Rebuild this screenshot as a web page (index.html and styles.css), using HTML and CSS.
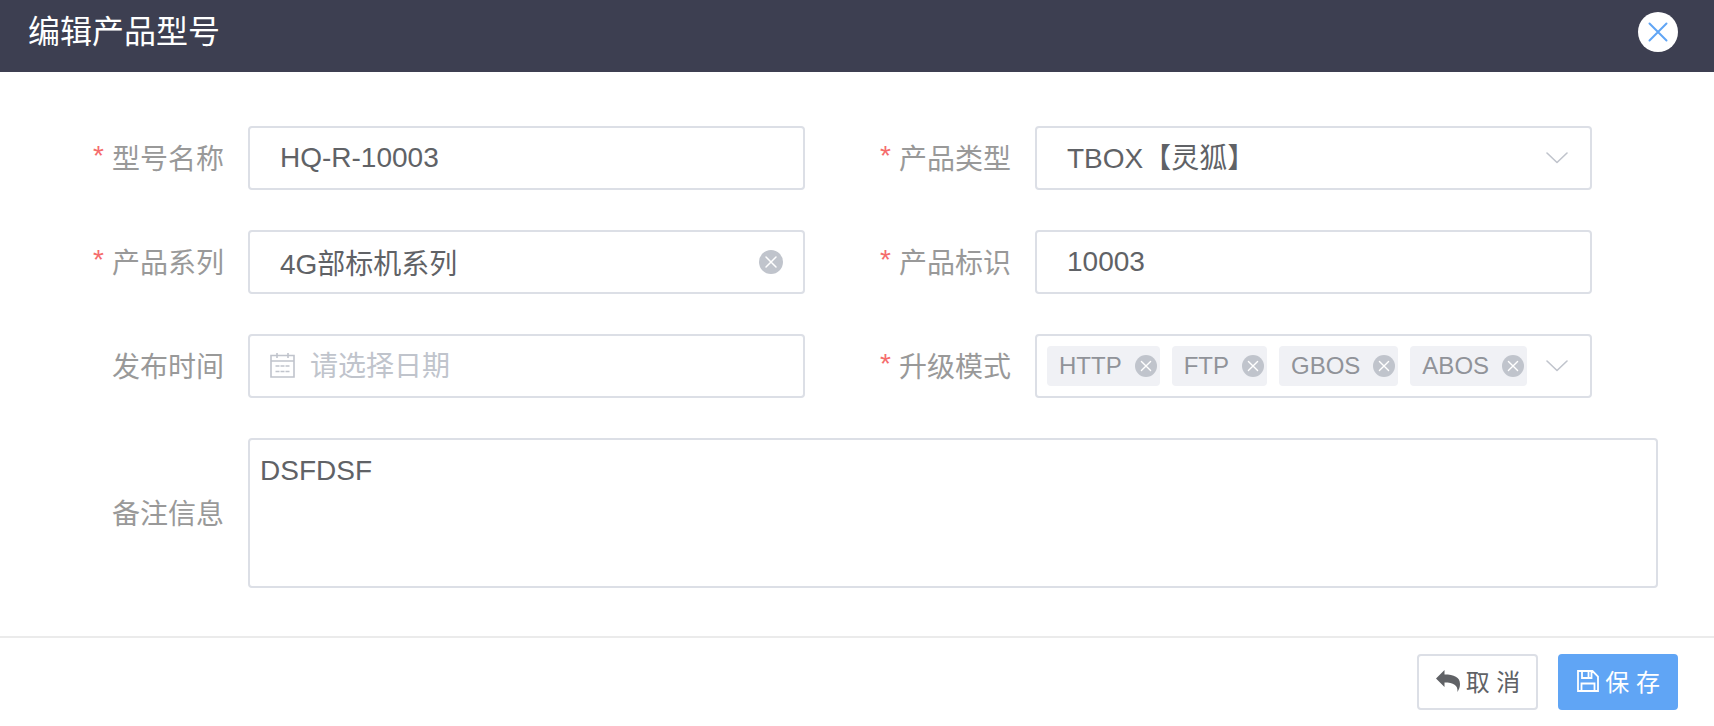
FILE: index.html
```html
<!DOCTYPE html>
<html lang="zh-CN">
<head>
    <meta charset="UTF-8">
    <meta name="viewport" content="width=device-width, initial-scale=1.0">
    <title>编辑产品型号</title>
    <link rel="stylesheet" href="styles.css">
</head>
<body>
    <!-- Shared icons -->
    <svg class="icon-defs" aria-hidden="true">
        <symbol id="icon-clear" viewBox="0 0 24 24">
            <circle cx="12" cy="12" r="12" fill="#c0c4cc"/>
            <path d="M7 7l10 10M17 7L7 17" fill="none" stroke="#fff" stroke-width="1.5" stroke-linecap="round"/>
        </symbol>
        <symbol id="icon-arrow" viewBox="0 0 22 12">
            <path d="M1 1l10 9.500L21 1" fill="none" stroke="#c0c4cc" stroke-width="1.600" stroke-linecap="round" stroke-linejoin="round"/>
        </symbol>
    </svg>

    <header class="dialog-header">
        <h1>编辑产品型号</h1>
        <button type="button" class="close-button" aria-label="关闭">
            <svg width="20" height="20" viewBox="0 0 20 20"><path d="M1.500 1.500l17 17M18.500 1.500l-17 17" fill="none" stroke="#60a5f5" stroke-width="2" stroke-linecap="round"/></svg>
        </button>
    </header>

    <form class="dialog-form" id="model-form">
        <div class="form-grid">
            <div class="form-item required">
                <label for="model-name">型号名称</label>
                <div class="control">
                    <input type="text" id="model-name" value="HQ-R-10003">
                </div>
            </div>
            <div class="form-item required">
                <label for="product-type">产品类型</label>
                <div class="control">
                    <select id="product-type">
                        <option>TBOX【灵狐】</option>
                    </select>
                    <svg class="select-arrow"><use href="#icon-arrow"/></svg>
                </div>
            </div>
            <div class="form-item required">
                <label for="product-series">产品系列</label>
                <div class="control">
                    <input type="text" id="product-series" value="4G部标机系列">
                    <button type="button" class="clear-button" aria-label="清空"><svg><use href="#icon-clear"/></svg></button>
                </div>
            </div>
            <div class="form-item required">
                <label for="product-code">产品标识</label>
                <div class="control">
                    <input type="text" id="product-code" value="10003">
                </div>
            </div>
            <div class="form-item">
                <label for="publish-date">发布时间</label>
                <div class="control">
                    <svg class="date-icon" viewBox="0 0 25 25" fill="none" stroke="#c0c4cc" stroke-width="1.600">
                        <path d="M1 2.500h23v21.500H1zM1 8h23M7 0v5M18 0v5"/>
                        <path d="M5.500 13h4M10.500 13h4M15.500 13h4M5.500 18.500h4M10.500 18.500h4M15.500 18.500h4"/>
                    </svg>
                    <input type="text" id="publish-date" class="date-input" placeholder="请选择日期">
                </div>
            </div>
            <div class="form-item required">
                <label for="upgrade-mode">升级模式</label>
                <div class="control tag-select">
                    <span class="tag">HTTP<button type="button" aria-label="移除 HTTP"><svg><use href="#icon-clear"/></svg></button></span>
                    <span class="tag">FTP<button type="button" aria-label="移除 FTP"><svg><use href="#icon-clear"/></svg></button></span>
                    <span class="tag">GBOS<button type="button" aria-label="移除 GBOS"><svg><use href="#icon-clear"/></svg></button></span>
                    <span class="tag">ABOS<button type="button" aria-label="移除 ABOS"><svg><use href="#icon-clear"/></svg></button></span>
                    <button type="button" id="upgrade-mode" class="tag-toggle" aria-haspopup="listbox"><svg class="select-arrow"><use href="#icon-arrow"/></svg></button>
                </div>
            </div>
        </div>
        <div class="form-item">
            <label for="remark">备注信息</label>
            <div class="control">
                <textarea id="remark">DSFDSF</textarea>
            </div>
        </div>
    </form>

    <footer class="dialog-footer">
        <button type="button" class="btn">
            <svg width="24" height="22" viewBox="0 0 24 22"><path d="M8.500 0v4.500C18 4.500 24 7 24 14c0 3-1 5.500-2.500 8 .5-7-4-9.500-13-9.500V17L0 8.500z" fill="#606266"/></svg>
            取 消
        </button>
        <button type="submit" form="model-form" class="btn btn-primary">
            <svg width="22" height="22" viewBox="0 0 22 22" fill="none" stroke="#fff" stroke-width="1.800"><path d="M1 1h14.500L21 6.500V21H1zM5 1v7h9.500V1M4.500 21v-7.500h13V21"/><path d="M11.500 2v5"/></svg>
            保 存
        </button>
    </footer>
</body>
</html>
```
FILE: styles.css
```css
* {
    box-sizing: border-box;
}

body {
    margin: 0;
    background: #ffffff;
    color: #606266;
    font-family: "Liberation Sans", "Noto Sans CJK SC", sans-serif;
    font-size: 28px;
}

button, input, select, textarea {
    font: inherit;
    color: inherit;
}

button {
    padding: 0;
    border: none;
    background: none;
    cursor: pointer;
}

svg {
    display: block;
}

.icon-defs {
    position: absolute;
    width: 0;
    height: 0;
}

/* Header */
.dialog-header {
    display: flex;
    justify-content: space-between;
    align-items: center;
    padding: 12px 36px 20px 28px;
    background: #3d3f51;
}

.dialog-header h1 {
    margin: 0;
    color: #ffffff;
    font-size: 32px;
    font-weight: 400;
    line-height: 40px;
}

.close-button {
    display: flex;
    align-items: center;
    justify-content: center;
    width: 40px;
    height: 40px;
    border-radius: 50%;
    background: #ffffff;
}

/* Form */
.dialog-form {
    padding: 54px 56px 48px 68px;
}

.form-grid {
    display: grid;
    grid-template-columns: 1fr 1fr;
    gap: 40px 50px;
    margin: 0 66px 40px 0;
}

.form-item {
    display: flex;
    align-items: center;
    gap: 24px;
    min-width: 0;
}

.form-item label {
    flex: 0 0 156px;
    padding-top: 4px;
    color: #999999;
    line-height: 40px;
    text-align: right;
}

.required label::before {
    content: "*";
    margin-right: 8px;
    color: #f56c6c;
    line-height: 1;
    vertical-align: 4px;
}

.control {
    position: relative;
    flex: 1;
    min-width: 0;
}

.control input,
.control select,
.control textarea,
.tag-select {
    display: block;
    width: 100%;
    height: 64px;
    padding: 0 30px;
    border: 2px solid #dcdfe6;
    border-radius: 4px;
    background: #ffffff;
    outline: none;
}

.control select {
    appearance: none;
}

.control input::placeholder {
    color: #c0c4cc;
    opacity: 1;
}

.control .date-input {
    padding: 2px 30px 0 60px;
}

.control textarea {
    height: 150px;
    padding: 11px 10px;
    line-height: 40px;
    resize: none;
}

.select-arrow {
    position: absolute;
    top: 26px;
    right: 24px;
    width: 22px;
    height: 12px;
    pointer-events: none;
}

.date-icon {
    position: absolute;
    top: 19px;
    left: 22px;
    width: 25px;
    height: 25px;
}

.clear-button {
    position: absolute;
    top: 20px;
    right: 22px;
}

.clear-button svg {
    width: 24px;
    height: 24px;
}

/* Multiple select */
.control.tag-select {
    display: flex;
    align-items: center;
    gap: 12px;
    padding: 0 10px;
}

.tag {
    display: flex;
    align-items: center;
    gap: 13px;
    height: 40px;
    padding: 0 3px 0 12px;
    border-radius: 4px;
    background: #f0f1f5;
    color: #909399;
    font-size: 24px;
}

.tag svg {
    width: 22px;
    height: 22px;
}

.tag-toggle {
    flex: 1;
    align-self: stretch;
}

.tag-toggle .select-arrow {
    top: 24px;
    right: 22px;
}

/* Footer */
.dialog-footer {
    display: flex;
    justify-content: flex-end;
    gap: 20px;
    padding: 16px 36px;
    border-top: 2px solid #ebebeb;
}

.btn {
    display: flex;
    align-items: center;
    gap: 6px;
    height: 56px;
    padding: 0 16px 3px 17px;
    border: 2px solid #dcdfe6;
    border-radius: 4px;
    font-size: 24px;
}

.btn-primary {
    border-color: #60a5f5;
    background: #60a5f5;
    color: #ffffff;
}
```
